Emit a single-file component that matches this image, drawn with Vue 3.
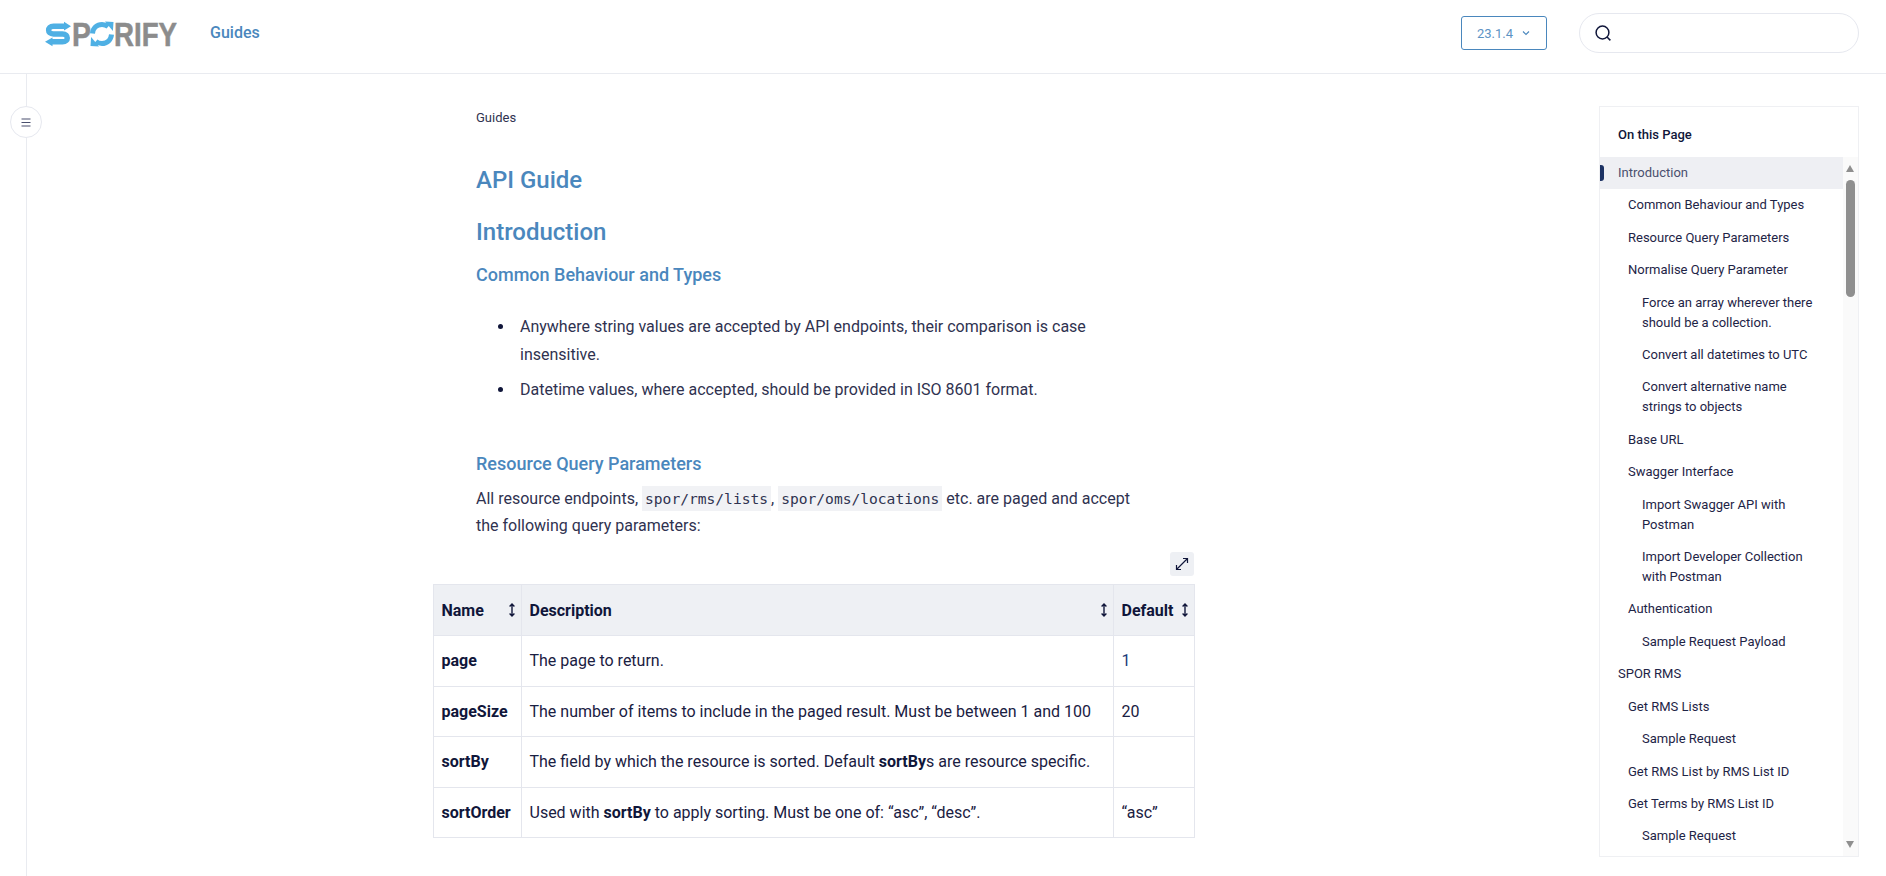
<template>
  <div class="app">
    <header class="topbar">
      <svg class="logo" viewBox="0 0 132 26" width="132" height="26">
        <path d="M21 5.2H8.5C5 5.2 3.6 7.2 3.6 9.2S5 13 8.5 13h9c3.4 0 4.8 1.9 4.8 3.9s-1.4 3.9-4.8 3.9H6" fill="none" stroke="#4fb0e4" stroke-width="5.4"/>
        <path d="M19 .8l7 4.4-7 4.4zM7.5 16.4L0 20.8l7.5 4.4z" fill="#4fb0e4"/>
        <text x="27" y="24.5" textLength="19" lengthAdjust="spacingAndGlyphs" class="logo-word">P</text>
        <path d="M47.5 12.5C48 7 52 3.5 57 3.5c2.6 0 4.6.8 6.2 2.2" fill="none" stroke="#4fb0e4" stroke-width="5"/>
        <path d="M60 .5l8.5.6-.6 9z" fill="#4fb0e4"/>
        <path d="M66.5 13.5C66 19 62 22.5 57 22.5c-2.6 0-4.6-.8-6.2-2.2" fill="none" stroke="#4fb0e4" stroke-width="5"/>
        <path d="M54 25.5l-8.5-.6.6-9z" fill="#4fb0e4"/>
        <text x="69" y="24.5" textLength="63" lengthAdjust="spacingAndGlyphs" class="logo-word">RIFY</text>
      </svg>
      <a class="nav-link">Guides</a>
      <div class="spacer"></div>
      <button class="version">
        23.1.4
        <svg width="10" height="10" viewBox="0 0 10 10"><path d="M2 3.5l3 3 3-3" fill="none" stroke="#4a87bd" stroke-width="1.1"/></svg>
      </button>
      <div class="search">
        <svg width="18" height="18" viewBox="0 0 18 18"><circle cx="8.5" cy="8.5" r="6.4" fill="none" stroke="#10163a" stroke-width="1.5"/><path d="M13 13l3.4 3.4" stroke="#10163a" stroke-width="1.5"/></svg>
      </div>
    </header>

    <div class="page">
      <aside class="rail">
        <button class="rail-toggle">
          <svg width="10" height="9" viewBox="0 0 10 9"><path d="M.5 1h9M.5 4.5h9M.5 8h9" stroke="#4a4f6e" stroke-width="1.2"/></svg>
        </button>
      </aside>

      <main class="article">
        <div class="crumb">Guides</div>
        <h1>API Guide</h1>
        <h2>Introduction</h2>
        <h3 class="first">Common Behaviour and Types</h3>
        <ul>
          <li>Anywhere string values are accepted by API endpoints, their comparison is case insensitive.</li>
          <li>Datetime values, where accepted, should be provided in ISO 8601 format.</li>
        </ul>
        <h3 class="second">Resource Query Parameters</h3>
        <p>
          All resource endpoints, <code>spor/rms/lists</code>, <code>spor/oms/locations</code> etc. are paged and accept
          the following query parameters:
        </p>
        <div class="table-wrap">
          <div class="table-tools">
            <button class="expand">
              <svg width="14" height="14" viewBox="0 0 14 14"><path d="M1.5 12.5l11-11M8 1.5h4.5V6M1.5 8v4.5H6" fill="none" stroke="#10163a" stroke-width="1.2"/></svg>
            </button>
          </div>
          <table>
            <colgroup>
              <col class="col-name" />
              <col class="col-desc" />
              <col class="col-def" />
            </colgroup>
            <thead>
              <tr>
                <th v-for="h in headers" :key="h">
                  <div class="th-inner">
                    {{ h }}
                    <svg width="8" height="14" viewBox="0 0 8 14"><path d="M4 1v12M1.6 3.4L4 1l2.4 2.4M1.6 10.6L4 13l2.4-2.4" fill="none" stroke="#10163a" stroke-width="1.4"/></svg>
                  </div>
                </th>
              </tr>
            </thead>
            <tbody>
              <tr>
                <td><b>page</b></td>
                <td>The page to return.</td>
                <td class="link-num">1</td>
              </tr>
              <tr>
                <td><b>pageSize</b></td>
                <td>The number of items to include in the paged result. Must be between 1 and 100</td>
                <td>20</td>
              </tr>
              <tr>
                <td><b>sortBy</b></td>
                <td>The field by which the resource is sorted. Default <b>sortBy</b>s are resource specific.</td>
                <td></td>
              </tr>
              <tr>
                <td><b>sortOrder</b></td>
                <td>Used with <b>sortBy</b> to apply sorting. Must be one of: “asc”, “desc”.</td>
                <td>“asc”</td>
              </tr>
            </tbody>
          </table>
        </div>
      </main>

      <nav class="toc">
        <div class="toc-title">On this Page</div>
        <div class="toc-body">
          <div class="toc-list">
            <a
              v-for="(item, i) in tocItems"
              :key="i"
              class="toc-item"
              :class="['lvl' + item.level, { active: i === 0 }]"
            >{{ item.text }}</a>
          </div>
          <div class="scrollbar">
            <span class="arrow up"></span>
            <span class="thumb"></span>
            <span class="arrow down"></span>
          </div>
        </div>
      </nav>
    </div>
  </div>
</template>

<script setup>
const headers = ["Name", "Description", "Default"];

const tocItems = [
  { level: 0, text: "Introduction" },
  { level: 1, text: "Common Behaviour and Types" },
  { level: 1, text: "Resource Query Parameters" },
  { level: 1, text: "Normalise Query Parameter" },
  { level: 2, text: "Force an array wherever there should be a collection." },
  { level: 2, text: "Convert all datetimes to UTC" },
  { level: 2, text: "Convert alternative name strings to objects" },
  { level: 1, text: "Base URL" },
  { level: 1, text: "Swagger Interface" },
  { level: 2, text: "Import Swagger API with Postman" },
  { level: 2, text: "Import Developer Collection with Postman" },
  { level: 1, text: "Authentication" },
  { level: 2, text: "Sample Request Payload" },
  { level: 0, text: "SPOR RMS" },
  { level: 1, text: "Get RMS Lists" },
  { level: 2, text: "Sample Request" },
  { level: 1, text: "Get RMS List by RMS List ID" },
  { level: 1, text: "Get Terms by RMS List ID" },
  { level: 2, text: "Sample Request" },
];
</script>

<style scoped>
.app {
  height: 876px;
  overflow: hidden;
  background: #fff;
  font-family: Roboto, "Liberation Sans", sans-serif;
  color: #2f3250;
}

.topbar {
  height: 66px;
  display: flex;
  align-items: center;
  padding: 0 27px 7px 45px;
  border-bottom: 1px solid #e9ebf0;
}

.logo {
  display: block;
  margin-top: 2px;
  overflow: visible;
}

.logo-word {
  font-family: "Liberation Sans", sans-serif;
  font-weight: 700;
  font-size: 33px;
  fill: #8c8c8c;
  stroke: #8c8c8c;
  stroke-width: 0.5;
}

.nav-link {
  margin: 0 0 1px 33px;
  font-size: 16px;
  font-weight: 500;
  color: #4a87bd;
}

.spacer {
  flex: 1;
}

.version {
  width: 86px;
  height: 34px;
  display: flex;
  align-items: center;
  justify-content: center;
  gap: 8px;
  background: #fff;
  border: 1px solid #4a87bd;
  border-radius: 3px;
  font-family: inherit;
  font-size: 13px;
  color: #5d93c4;
}

.search {
  width: 280px;
  height: 40px;
  box-sizing: border-box;
  margin-left: 32px;
  padding-left: 14px;
  display: flex;
  align-items: center;
  border: 1px solid #e6e8ef;
  border-radius: 20px;
}

.page {
  display: flex;
  height: 803px;
}

.rail {
  position: relative;
  width: 26px;
  border-right: 1px solid #e9ebf0;
  flex: none;
}

.rail-toggle {
  position: absolute;
  left: 10px;
  top: 32px;
  width: 32px;
  height: 32px;
  padding: 0;
  display: flex;
  align-items: center;
  justify-content: center;
  background: #fff;
  border: 1px solid #e6e8ef;
  border-radius: 50%;
}

.article {
  width: 674px;
  margin-left: 449px;
  padding-top: 34px;
  flex: none;
}

.crumb {
  font-size: 13px;
  line-height: 20px;
}

h1,
h2,
h3 {
  margin: 0;
  color: #4a87bd;
  font-weight: 500;
}

h1 {
  margin-top: 36px;
  font-size: 24px;
  line-height: 32px;
}

h2 {
  margin-top: 20px;
  font-size: 24px;
  line-height: 32px;
}

h3 {
  font-size: 18px;
  line-height: 26px;
}

h3.first {
  margin-top: 14px;
}

h3.second {
  margin-top: 47px;
}

ul {
  margin: 25px 0 0;
  padding-left: 44px;
  list-style: none;
  font-size: 16px;
  line-height: 28px;
}

li {
  position: relative;
}

li::before {
  content: "";
  position: absolute;
  left: -22px;
  top: 11px;
  width: 5px;
  height: 5px;
  border-radius: 50%;
  background: #10163a;
}

li + li {
  margin-top: 7px;
}

p {
  margin: 9px 0 0;
  font-size: 16px;
  line-height: 26.5px;
}

code {
  display: inline-block;
  height: 25px;
  padding: 0 3px;
  background: #f1f2f5;
  font-family: "DejaVu Sans Mono", monospace;
  font-size: 14.6px;
  line-height: 25px;
}

.table-wrap {
  width: 761px;
  margin: 13px 0 0 -43px;
}

.table-tools {
  display: flex;
  justify-content: flex-end;
  margin-bottom: 8px;
}

.expand {
  width: 24px;
  height: 24px;
  padding: 0;
  display: flex;
  align-items: center;
  justify-content: center;
  background: #eef0f4;
  border: none;
  border-radius: 3px;
}

table {
  width: 761px;
  table-layout: fixed;
  border-collapse: collapse;
  font-size: 16px;
  color: #1a2042;
}

.col-name {
  width: 88px;
}

.col-desc {
  width: 592px;
}

.col-def {
  width: 81px;
}

th,
td {
  padding: 0 8px 0 7.5px;
  border: 1px solid #e4e6ed;
  text-align: left;
}

th {
  height: 50px;
  padding-right: 5px;
  background: #eef0f4;
  font-weight: 700;
  color: #10163a;
}

td {
  height: 49.5px;
}

td b {
  color: #10163a;
}

.th-inner {
  display: flex;
  align-items: center;
  justify-content: space-between;
}

.link-num {
  color: #1c3a7a;
}

.toc {
  width: 260px;
  height: 751px;
  box-sizing: border-box;
  margin: 32px 27px 0 auto;
  flex: none;
  display: flex;
  flex-direction: column;
  border: 1px solid #eff0f3;
}

.toc-title {
  height: 50px;
  box-sizing: border-box;
  padding: 18px 0 0 18px;
  font-size: 13px;
  line-height: 20px;
  font-weight: 500;
  color: #10163a;
}

.toc-body {
  flex: 1;
  min-height: 0;
  display: flex;
}

.toc-list {
  flex: 1;
  overflow: hidden;
}

.toc-item {
  display: block;
  padding: 6px 24px 6.42px 18px;
  font-size: 13px;
  line-height: 20px;
  color: #1e2446;
}

.toc-item.lvl1 {
  padding-left: 28px;
}

.toc-item.lvl2 {
  padding-left: 42px;
}

.toc-item.active {
  position: relative;
  background: #eeeff3;
  color: #4a4f6e;
}

.toc-item.active::before {
  content: "";
  position: absolute;
  left: 0;
  top: 8px;
  width: 4px;
  height: 16px;
  background: #1c3263;
  border-radius: 0 3px 3px 0;
}

.scrollbar {
  width: 15px;
  flex: none;
  box-sizing: border-box;
  padding: 8px 3px 8px;
  display: flex;
  flex-direction: column;
  background: #fafafa;
}

.arrow {
  display: block;
  width: 0;
  height: 0;
  border-left: 4.5px solid transparent;
  border-right: 4.5px solid transparent;
}

.arrow.up {
  border-bottom: 7px solid #8f8f8f;
}

.arrow.down {
  margin-top: auto;
  border-top: 7px solid #8f8f8f;
}

.thumb {
  display: block;
  height: 117px;
  margin-top: 8px;
  background: #8f8f8f;
  border-radius: 5px;
}
</style>
